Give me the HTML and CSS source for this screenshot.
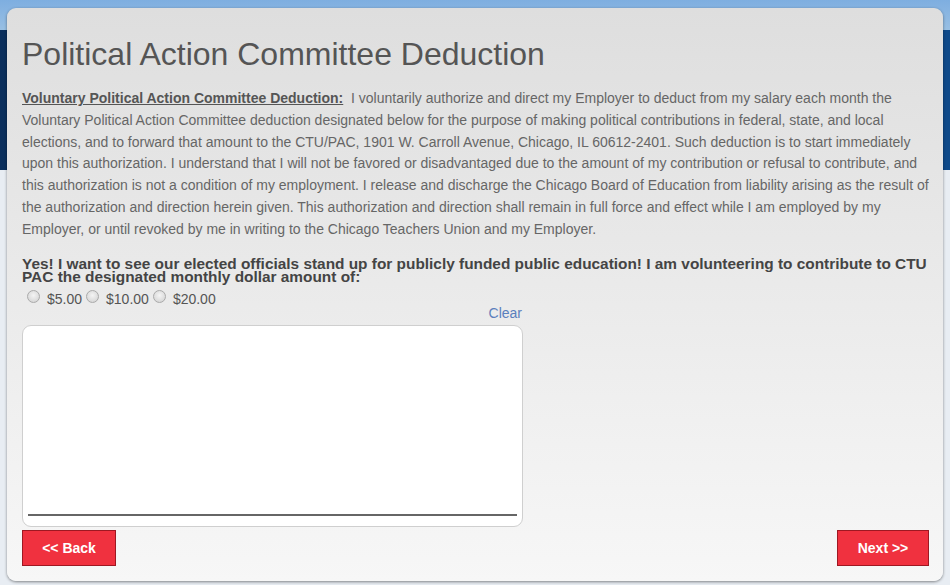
FILE: index.html
```html
<!DOCTYPE html>
<html>
<head>
<meta charset="utf-8">
<link rel="stylesheet" href="styles.css">
</head>
<body>
<div class="bg-top"></div>
<div class="bg-band"></div>
<div class="card">
  <h1 class="title">Political Action Committee Deduction</h1>
  <p class="terms"><span class="terms-head">Voluntary Political Action Committee Deduction:</span>&nbsp; I voluntarily authorize and direct my Employer to deduct from my salary each month the Voluntary Political Action Committee deduction designated below for the purpose of making political contributions in federal, state, and local elections, and to forward that amount to the CTU/PAC, 1901 W. Carroll Avenue, Chicago, IL 60612-2401. Such deduction is to start immediately upon this authorization. I understand that I will not be favored or disadvantaged due to the amount of my contribution or refusal to contribute, and this authorization is not a condition of my employment. I release and discharge the Chicago Board of Education from liability arising as the result of the authorization and direction herein given. This authorization and direction shall remain in full force and effect while I am employed by my Employer, or until revoked by me in writing to the Chicago Teachers Union and my Employer.</p>
  <div class="question">Yes! I want to see our elected officials stand up for publicly funded public education! I am volunteering to contribute to CTU PAC the designated monthly dollar amount of:</div>
  <div class="options">
    <label class="opt"><span class="radio"></span>$5.00</label>
    <label class="opt"><span class="radio"></span>$10.00</label>
    <label class="opt"><span class="radio"></span>$20.00</label>
  </div>
  <div class="sig-wrap">
    <div class="clear-row"><a class="clear">Clear</a></div>
    <div class="sig-box"><div class="sig-line"></div></div>
  </div>
  <div class="nav">
    <button class="btn">&lt;&lt; Back</button>
    <button class="btn btn-next">Next &gt;&gt;</button>
  </div>
</div>
</body>
</html>
```
FILE: styles.css
```css
html, body {
  margin: 0;
  padding: 0;
}
body {
  width: 950px;
  height: 585px;
  overflow: hidden;
  position: relative;
  background: #e8edf3;
  font-family: "Liberation Sans", Arial, sans-serif;
}
.bg-top {
  height: 30px;
  background: linear-gradient(to bottom, #7eaee0, #98bfe3);
}
.bg-band {
  height: 140px;
  background: linear-gradient(to right, #0b2f5c, #0f4a8a 60%, #0f4a8a);
}
.card {
  position: absolute;
  left: 7px;
  top: 8px;
  width: 936px;
  height: 573px;
  box-sizing: border-box;
  padding: 28px 14px 15px 15px;
  border-radius: 9px;
  background: linear-gradient(to bottom, #dedede, #f7f7f7);
  box-shadow: 0 1px 3px rgba(0,0,0,0.45);
  display: flex;
  flex-direction: column;
}
.title {
  margin: 0;
  font-size: 32px;
  font-weight: normal;
  color: #555;
  line-height: 36px;
}
.terms {
  margin: 16px 0 0 0;
  font-size: 14px;
  line-height: 21.8px;
  color: #666;
}
.terms-head {
  font-weight: bold;
  text-decoration: underline;
  color: #555;
}
.question {
  margin-top: 16px;
  font-size: 15.4px;
  font-weight: bold;
  line-height: 13px;
  color: #444;
}
.options {
  display: flex;
  margin-top: 8px;
  padding-left: 1px;
  font-size: 14px;
  color: #555;
  line-height: 16px;
}
.opt {
  display: flex;
  align-items: center;
}
.radio {
  width: 11px;
  height: 11px;
  border-radius: 50%;
  border: 1px solid #aaa;
  background: radial-gradient(circle at 50% 40%, #f4f4f4, #cfcfcf);
  margin-left: 4px;
  margin-right: 7px;
  margin-top: -4px;
}
.sig-wrap {
  width: 501px;
}
.clear-row {
  display: flex;
  justify-content: flex-end;
  padding-right: 1px;
  margin-top: -3px;
}
.clear {
  font-size: 14px;
  color: #5b80bd;
  line-height: 18px;
}
.sig-box {
  margin-top: 3px;
  height: 202px;
  box-sizing: border-box;
  background: #fff;
  border: 1px solid #cfcfcf;
  border-radius: 9px;
  padding: 0 5px 10px 5px;
  display: flex;
  flex-direction: column;
  justify-content: flex-end;
}
.sig-line {
  height: 2px;
  background: #666;
}
.nav {
  display: flex;
  justify-content: space-between;
  margin-top: 3px;
}
.btn {
  width: 94px;
  height: 36px;
  background: #f0313f;
  border: 1px solid #9e1822;
  color: #fff;
  font-family: "Liberation Sans", Arial, sans-serif;
  font-size: 14px;
  font-weight: bold;
  padding: 0;
}
.btn-next {
  width: 92px;
}
```
